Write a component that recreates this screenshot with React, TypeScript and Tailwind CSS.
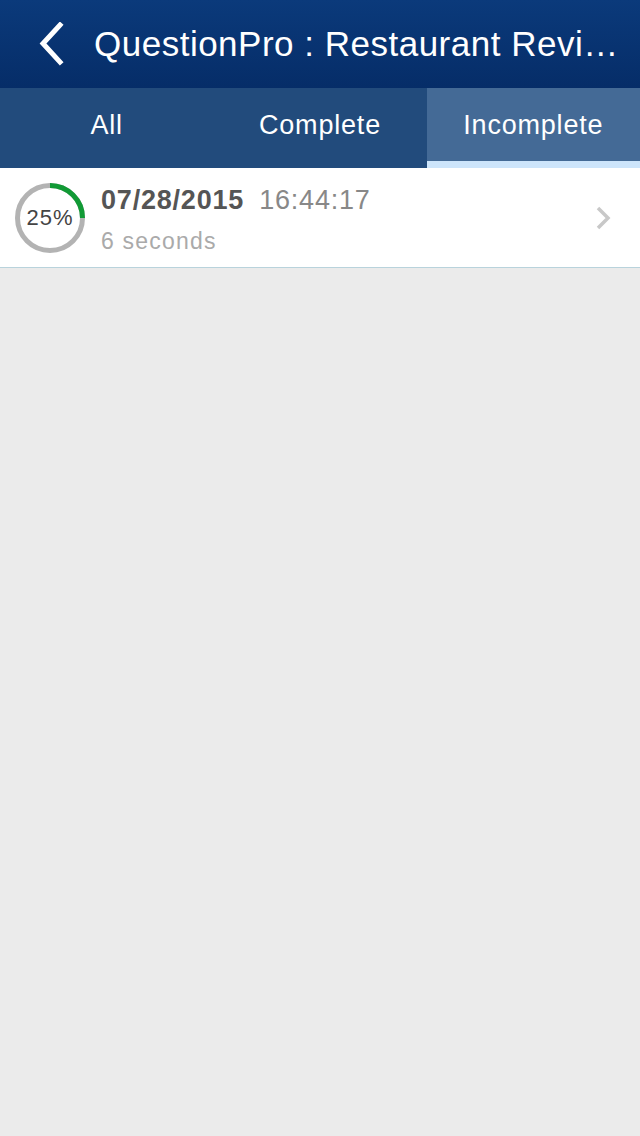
import { useState } from "react";

const tabs = ["All", "Complete", "Incomplete"];

function Progress({ pct }: { pct: number }) {
  const r = 32.5;
  const c = 2 * Math.PI * r;
  return (
    <div className="relative w-[70px] h-[70px] shrink-0">
      <svg width="70" height="70" viewBox="0 0 70 70" className="absolute inset-0">
        <circle cx="35" cy="35" r={r} fill="none" stroke="#b3b3b3" strokeWidth="5" />
        <circle
          cx="35"
          cy="35"
          r={r}
          fill="none"
          stroke="#119a35"
          strokeWidth="5"
          strokeDasharray={`${(c * pct) / 100} ${c}`}
          transform="rotate(-90 35 35)"
        />
      </svg>
      <div className="absolute inset-0 flex items-center justify-center text-[22px] tracking-[1px] text-[#444]">{pct}%</div>
    </div>
  );
}

export default function App() {
  const [active, setActive] = useState(2);

  return (
    <div className="w-[640px] h-[1136px] bg-[#ebebeb] flex flex-col font-['Liberation_Sans',Arial,sans-serif]">
      <div className="h-[88px] bg-gradient-to-b from-[#0b3a7b] to-[#062d68] flex items-center text-white">
        <svg width="30" height="44" viewBox="0 0 30 44" className="ml-[37px] mr-[27px]">
          <path d="M23 3 L6 21.5 L23 40" fill="none" stroke="white" strokeWidth="5" strokeLinecap="square" />
        </svg>
        <div className="text-[35px] tracking-[0.5px] whitespace-nowrap">QuestionPro : Restaurant Revi…</div>
      </div>

      <div className="h-[80px] bg-[#224b7c] grid grid-cols-3">
        {tabs.map((t, i) => (
          <button
            key={t}
            onClick={() => setActive(i)}
            className={
              i === active
                ? "bg-[#446a96] text-white text-[27px] tracking-[0.8px] border-b-[7px] border-[#cde5fb] pb-[6px] pt-[7px] leading-none"
                : "text-white text-[27px] tracking-[0.8px] pb-[6px] leading-none"
            }
          >
            {t}
          </button>
        ))}
      </div>

      <div className="h-[100px] bg-white border-b border-[#b9d3dc] flex items-center pl-[15px] pr-[28px]">
        <Progress pct={25} />
        <div className="ml-[16px] mt-[5px] flex-1 flex flex-col">
          <div className="flex items-baseline gap-[15px] leading-none tracking-[0.8px]">
            <span className="text-[27px] font-bold text-[#555]">07/28/2015</span>
            <span className="text-[27px] text-[#888]">16:44:17</span>
          </div>
          <div className="text-[23px] tracking-[1.2px] text-[#aaa] mt-[16px] leading-none">6 seconds</div>
        </div>
        <svg width="18" height="26" viewBox="0 0 18 26">
          <path d="M4 3 L14 13 L4 23" fill="none" stroke="#c8c8c8" strokeWidth="3.5" />
        </svg>
      </div>
    </div>
  );
}
